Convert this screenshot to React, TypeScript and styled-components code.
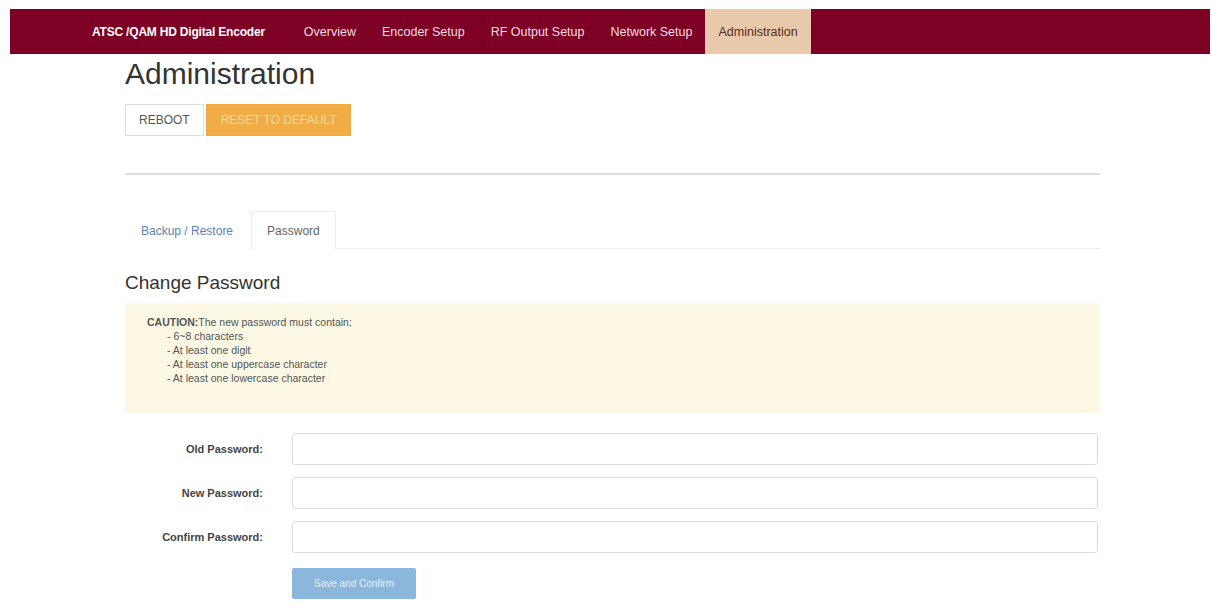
import React from 'react';
import styled, { createGlobalStyle } from 'styled-components';

const Global = createGlobalStyle`
  body { margin: 9px 2px 0 10px; font-family: "Liberation Sans", Arial, sans-serif; color: #333; background: #fff; }
`;

const Nav = styled.div`
  display: flex;
  align-items: stretch;
  height: 45px;
  background: #7d0124;
  padding-left: 82px;
`;

const Brand = styled.div`
  color: #fff;
  font-size: 12px;
  font-weight: bold;
  display: flex;
  align-items: center;
  padding-right: 26px;
  letter-spacing: -0.2px;
`;

const NavItem = styled.div<{ $active?: boolean }>`
  display: flex;
  align-items: center;
  padding: 0 13px;
  font-size: 12.5px;
  color: ${p => (p.$active ? '#5a2a1a' : '#f4dde2')};
  background: ${p => (p.$active ? '#e8c9ab' : 'transparent')};
`;

const Container = styled.div`
  width: 975px;
  margin-left: 115px;
`;

const Title = styled.h1`
  margin: 3px 0 13px;
  font-size: 30px;
  font-weight: normal;
  color: #333;
`;

const Btns = styled.div`
  display: flex;
  gap: 2px;
`;

const Btn = styled.div<{ $warn?: boolean }>`
  height: 30px;
  display: flex;
  align-items: center;
  padding: 0 ${p => (p.$warn ? '14px' : '13px')};
  font-size: 12px;
  border: 1px solid ${p => (p.$warn ? '#efa73f' : '#ddd')};
  background: ${p => (p.$warn ? '#f0ac45' : '#fff')};
  color: ${p => (p.$warn ? '#f8d9a8' : '#555')};
`;

const Rule = styled.hr`
  border: 0;
  border-top: 2px solid #ddd;
  margin: 37px 0 36px;
`;

const Tabs = styled.div`
  display: flex;
  border-bottom: 1px solid #eee;
  height: 37px;
`;

const Tab = styled.div<{ $active?: boolean }>`
  display: flex;
  align-items: center;
  padding: 0 15px;
  margin-right: 2px;
  font-size: 12px;
  color: ${p => (p.$active ? '#666' : '#5d83b8')};
  border: 1px solid ${p => (p.$active ? '#eee' : 'transparent')};
  border-bottom: 0;
  background: #fff;
  margin-bottom: -1px;
`;

const SubTitle = styled.h3`
  margin: 23px 0 9px;
  font-size: 19px;
  font-weight: normal;
`;

const Alert = styled.div`
  background: #fcf8e3;
  padding: 12px 12px 8px 22px;
  font-size: 10.5px;
  color: #555;
  line-height: 14px;
  height: 90px;
`;

const List = styled.ul`
  margin: 0;
  padding-left: 20px;
  list-style: none;
  li::before { content: '- '; }
`;

const Form = styled.div`
  margin-top: 20px;
  display: flex;
  flex-direction: column;
  gap: 12px;
`;

const Row = styled.div`
  display: flex;
  align-items: center;
`;

const Label = styled.label`
  width: 138px;
  text-align: right;
  font-size: 11px;
  font-weight: bold;
  color: #444;
  padding-right: 29px;
`;

const Input = styled.div`
  flex: 1;
  height: 30px;
  border: 1px solid #ddd;
  border-radius: 3px;
  margin-right: 2px;
`;

const Save = styled.div`
  margin: 3px 0 0 167px;
  width: 124px;
  height: 31px;
  display: flex;
  align-items: center;
  justify-content: center;
  background: #8cb7dc;
  color: #e6f0f8;
  font-size: 10px;
  border-radius: 2px;
`;

export default function App() {
  return (
    <>
      <Global />
      <Nav>
        <Brand>ATSC /QAM HD Digital Encoder</Brand>
        <NavItem>Overview</NavItem>
        <NavItem>Encoder Setup</NavItem>
        <NavItem>RF Output Setup</NavItem>
        <NavItem>Network Setup</NavItem>
        <NavItem $active>Administration</NavItem>
      </Nav>
      <Container>
        <Title>Administration</Title>
        <Btns>
          <Btn>REBOOT</Btn>
          <Btn $warn>RESET TO DEFAULT</Btn>
        </Btns>
        <Rule />
        <Tabs>
          <Tab>Backup / Restore</Tab>
          <Tab $active>Password</Tab>
        </Tabs>
        <SubTitle>Change Password</SubTitle>
        <Alert>
          <b>CAUTION:</b>The new password must contain:
          <List>
            <li>6~8 characters</li>
            <li>At least one digit</li>
            <li>At least one uppercase character</li>
            <li>At least one lowercase character</li>
          </List>
        </Alert>
        <Form>
          <Row><Label>Old Password:</Label><Input /></Row>
          <Row><Label>New Password:</Label><Input /></Row>
          <Row><Label>Confirm Password:</Label><Input /></Row>
          <Save>Save and Confirm</Save>
        </Form>
      </Container>
    </>
  );
}
